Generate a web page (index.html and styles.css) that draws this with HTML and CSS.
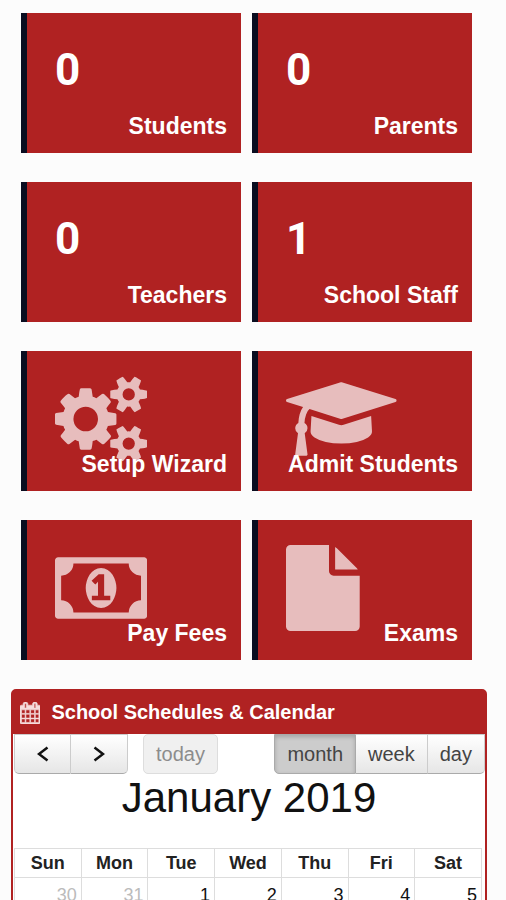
FILE: index.html
```html
<!DOCTYPE html>
<html lang="en">
<head>
<meta charset="utf-8">
<meta name="viewport" content="width=device-width, initial-scale=1">
<title>School Dashboard</title>
<link rel="stylesheet" href="styles.css">
</head>
<body>
<main class="page">
  <nav class="tiles" aria-label="Dashboard">
    <a class="tile" href="#students"><span class="tile-count">0</span><span class="tile-label">Students</span></a>
    <a class="tile" href="#parents"><span class="tile-count">0</span><span class="tile-label">Parents</span></a>
    <a class="tile" href="#teachers"><span class="tile-count">0</span><span class="tile-label">Teachers</span></a>
    <a class="tile" href="#staff"><span class="tile-count">1</span><span class="tile-label">School Staff</span></a>
    <a class="tile" href="#setup">
      <svg class="tile-icon" viewBox="0 0 1920 1792" aria-hidden="true"><path d="M896 896q0-106-75-181t-181-75-181 75-75 181 75 181 181 75 181-75 75-181zm768 512q0-52-38-90t-90-38-90 38-38 90q0 53 37.5 90.5t90.5 37.5 90.5-37.5 37.5-90.5zm0-1024q0-52-38-90t-90-38-90 38-38 90q0 53 37.5 90.5t90.5 37.5 90.5-37.5 37.5-90.5zm-384 421v185q0 10-7 19.5t-16 10.5l-155 24q-11 35-32 76 34 48 90 115 7 11 7 20 0 12-7 19-23 30-82.5 89.5t-78.5 59.5q-11 0-21-7l-115-90q-37 19-77 31-11 108-23 155-7 24-30 24h-186q-11 0-20-7.5t-10-17.5l-23-153q-34-10-75-31l-118 89q-7 7-20 7-11 0-21-8-144-133-144-160 0-9 7-19 10-14 41-53t47-61q-23-44-35-82l-152-24q-10-1-17-9.5t-7-19.5v-185q0-10 7-19.5t16-10.5l155-24q11-35 32-76-34-48-90-115-7-11-7-20 0-12 7-20 22-30 82-89t79-59q11 0 21 7l115 90q34-18 77-32 11-108 23-154 7-24 30-24h186q11 0 20 7.5t10 17.5l23 153q34 10 75 31l118-89q8-7 20-7 11 0 21 8 144 133 144 160 0 8-7 19-12 16-42 54t-45 60q23 48 34 82l152 23q10 2 17 10.5t7 19.5zm640 533v140q0 16-149 31-12 27-30 52 51 113 51 138 0 4-4 7-122 71-124 71-8 0-46-47t-52-68q-20 2-30 2t-30-2q-14 21-52 68t-46 47q-2 0-124-71-4-3-4-7 0-25 51-138-18-25-30-52-149-15-149-31v-140q0-16 149-31 13-29 30-52-51-113-51-138 0-4 4-7 4-2 35-20t59-34 30-16q8 0 46 46.5t52 67.5q20-2 30-2t30 2q51-71 92-112l6-2q4 0 124 70 4 3 4 7 0 25-51 138 17 23 30 52 149 15 149 31zm0-1024v140q0 16-149 31-12 27-30 52 51 113 51 138 0 4-4 7-122 71-124 71-8 0-46-47t-52-68q-20 2-30 2t-30-2q-14 21-52 68t-46 47q-2 0-124-71-4-3-4-7 0-25 51-138-18-25-30-52-149-15-149-31v-140q0-16 149-31 13-29 30-52-51-113-51-138 0-4 4-7 4-2 35-20t59-34 30-16q8 0 46 46.5t52 67.5q20-2 30-2t30 2q51-71 92-112l6-2q4 0 124 70 4 3 4 7 0 25-51 138 17 23 30 52 149 15 149 31z"/></svg>
      <span class="tile-label">Setup Wizard</span>
    </a>
    <a class="tile" href="#admit">
      <svg class="tile-icon" viewBox="0 0 2304 1792" aria-hidden="true"><path d="M1774 836l18 316q4 69-82 128t-235 93.5-323 34.5-323-34.5-235-93.5-82-128l18-316 574 181q22 7 48 7t48-7zm530-324q0 23-22 31l-1120 352q-4 1-10 1t-10-1l-652-206q-43 34-71 111.5t-34 178.5q63 36 63 109 0 69-58 107l58 433q2 14-8 25-9 11-24 11h-192q-15 0-24-11-10-11-8-25l58-433q-58-38-58-107 0-73 65-111 11-207 98-330l-333-104q-22-8-22-31t22-31l1120-352q4-1 10-1t10 1l1120 352q22 8 22 31z"/></svg>
      <span class="tile-label">Admit Students</span>
    </a>
    <a class="tile" href="#fees">
      <svg class="tile-icon" viewBox="0 0 1920 1792" aria-hidden="true"><path d="M768 1152h384v-96h-128v-448h-114l-148 137 77 80q42-37 55-57h2v288h-128v96zm512-256q0 70-21 142t-59.5 134-101.5 101-138 39-138-39-101.5-101-59.5-134-21-142 21-142 59.5-134 101.5-101 138-39 138 39 101.5 101 59.5 134 21 142zm512 256v-512q-106 0-181-75t-75-181h-1152q0 106-75 181t-181 75v512q106 0 181 75t75 181h1152q0-106 75-181t181-75zm128-832v1152q0 26-19 45t-45 19h-1792q-26 0-45-19t-19-45v-1152q0-26 19-45t45-19h1792q26 0 45 19t19 45z"/></svg>
      <span class="tile-label">Pay Fees</span>
    </a>
    <a class="tile" href="#exams">
      <svg class="tile-icon" viewBox="128 0 1536 1792" aria-hidden="true"><path d="M1152 512v-472q22 14 36 28l408 408q14 14 28 36h-472zm-128 32q0 40 28 68t68 28h544v1056q0 40-28 68t-68 28h-1344q-40 0-68-28t-28-68v-1600q0-40 28-68t68-28h800v544z"/></svg>
      <span class="tile-label">Exams</span>
    </a>
  </nav>

  <section class="panel">
    <h2 class="panel-title">
      <svg class="panel-icon" viewBox="64 0 1664 1792" aria-hidden="true"><path d="M192 1664h288v-288h-288v288zm352 0h320v-288h-320v288zm-352-352h288v-320h-288v320zm352 0h320v-320h-320v320zm-352-384h288v-288h-288v288zm736 736h320v-288h-320v288zm-384-736h320v-288h-320v288zm768 736h288v-288h-288v288zm-384-352h320v-320h-320v320zm-352-864v-288q0-13-9.500-22.500t-22.500-9.500h-64q-13 0-22.500 9.500t-9.500 22.500v288q0 13 9.500 22.500t22.500 9.500h64q13 0 22.500-9.500t9.500-22.500zm736 864h288v-320h-288v320zm-384-384h320v-288h-320v288zm384 0h288v-288h-288v288zm32-480v-288q0-13-9.500-22.500t-22.500-9.500h-64q-13 0-22.500 9.500t-9.500 22.500v288q0 13 9.500 22.500t22.500 9.500h64q13 0 22.500-9.500t9.500-22.500zm384-64v1280q0 52-38 90t-90 38h-1408q-52 0-90-38t-38-90v-1280q0-52 38-90t90-38h128v-96q0-66 47-113t113-47h64q66 0 113 47t47 113v96h384v-96q0-66 47-113t113-47h64q66 0 113 47t47 113v96h128q52 0 90 38t38 90z"/></svg>
      School Schedules &amp; Calendar
    </h2>
    <div class="toolbar">
      <div class="group">
        <button class="btn btn-arrow" type="button" aria-label="Previous month"><svg class="arrow" viewBox="0 0 12 16" aria-hidden="true"><path d="M10.500 1.500 2 8l8.500 6.500"/></svg></button>
        <button class="btn btn-arrow" type="button" aria-label="Next month"><svg class="arrow" viewBox="0 0 12 16" aria-hidden="true"><path d="M1.500 1.500 10 8l-8.500 6.500"/></svg></button>
      </div>
      <div class="group">
        <button class="btn" type="button" disabled>today</button>
      </div>
      <div class="group group-end">
        <button class="btn btn-active" type="button">month</button>
        <button class="btn" type="button">week</button>
        <button class="btn" type="button">day</button>
      </div>
    </div>
    <h3 class="month">January 2019</h3>
    <table class="calendar">
      <thead>
        <tr><th>Sun</th><th>Mon</th><th>Tue</th><th>Wed</th><th>Thu</th><th>Fri</th><th>Sat</th></tr>
      </thead>
      <tbody>
        <tr><td class="other">30</td><td class="other">31</td><td>1</td><td>2</td><td>3</td><td>4</td><td>5</td></tr>
      </tbody>
    </table>
  </section>
</main>
</body>
</html>
```

FILE: styles.css
```css
* {
  box-sizing: border-box;
}

body {
  margin: 0;
  height: 100vh;
  overflow: hidden;
  background: #fcfcfc;
  color: #111;
  font-family: "Liberation Sans", Arial, sans-serif;
}

.page {
  padding: 13px 19px 0 11px;
}

.tiles {
  display: grid;
  grid-template-columns: 1fr 1fr;
  gap: 29px 11px;
  padding: 0 15px 0 10px;
}

.tile {
  display: grid;
  height: 140px;
  padding: 0 14px 0 28px;
  border-left: 6px solid #0a0d20;
  background: #b02222;
  color: #fff;
  font-weight: bold;
  text-decoration: none;
}

.tile-count,
.tile-icon,
.tile-label {
  grid-area: 1 / 1;
}

.tile-count {
  padding-top: 32px;
  font: bold 44px/50px Roboto, sans-serif;
}

.tile-icon {
  height: 86px;
  margin-top: 25px;
  fill: #fff;
  opacity: 0.7;
}

.tile-label {
  z-index: 1;
  align-self: end;
  justify-self: end;
  padding-bottom: 14px;
  font-size: 23px;
  line-height: 26px;
  white-space: nowrap;
}

.panel {
  margin-top: 29px;
  border: 2px solid #b02222;
  border-radius: 5px;
  background: #fff;
}

.panel-title {
  display: flex;
  align-items: center;
  gap: 11px;
  margin: 0;
  padding: 0 7px;
  height: 43px;
  background: #b02222;
  color: #fff;
  font-size: 20px;
}

.panel-icon {
  height: 22px;
  fill: #f6dcdc;
  stroke: #f6dcdc;
  stroke-width: 50;
}

.toolbar {
  display: flex;
  gap: 15px;
  padding-left: 1px;
}

.group {
  display: flex;
}

.group-end {
  margin-left: auto;
}

.btn {
  height: 40px;
  padding: 0 12px;
  border: 1px solid #ccc;
  border-bottom-color: #aaa;
  background: linear-gradient(#fff, #e6e6e6);
  color: #444;
  font: 20px "Liberation Sans", Arial, sans-serif;
}

.btn + .btn {
  border-left: 0;
}

.btn:first-child {
  border-radius: 0 0 0 5px;
}

.btn:last-child {
  border-radius: 0 0 5px 0;
}

.btn:only-child {
  border-radius: 5px;
}

.btn:disabled {
  border-color: #ddd;
  background: #f0f0f0;
  color: #8c8c8c;
}

.btn-active {
  border-color: #aaa;
  background: #ccc;
  box-shadow: inset 0 2px 4px #0003;
}

.btn-arrow {
  width: 57px;
}

.arrow {
  display: block;
  width: 12px;
  height: 16px;
  margin: auto;
  fill: none;
  stroke: #111;
  stroke-width: 2.5;
}

.month {
  margin: 0;
  text-align: center;
  font-size: 42px;
  font-weight: normal;
  line-height: 48px;
}

.calendar {
  width: calc(100% - 4px);
  margin: 26px 3px 0 1px;
  border-collapse: collapse;
  table-layout: fixed;
}

.calendar th,
.calendar td {
  border: 1px solid #ddd;
}

.calendar th {
  height: 29px;
  padding: 0;
  color: #222;
  font-size: 18px;
}

.calendar td {
  height: 72px;
  padding: 6px 4px;
  text-align: right;
  vertical-align: top;
  font-size: 18px;
  line-height: 22px;
}

.calendar .other {
  color: #bbb;
}
```
